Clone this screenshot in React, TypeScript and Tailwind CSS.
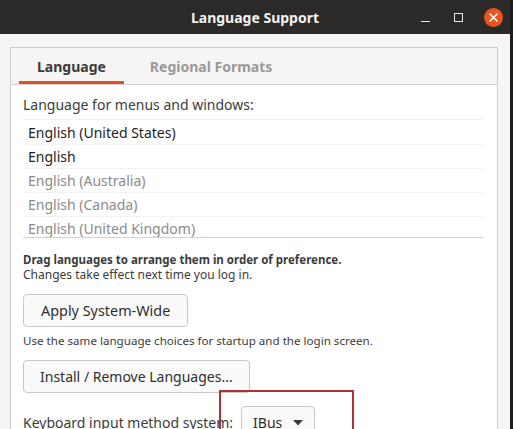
import React from "react";

const languages = [
  { name: "English (United States)", active: true },
  { name: "English", active: true },
  { name: "English (Australia)", active: false },
  { name: "English (Canada)", active: false },
  { name: "English (United Kingdom)", active: false },
];

const font = { fontFamily: '"Noto Sans", "Open Sans", sans-serif' };

export default function App() {
  return (
    <div className="flex h-[429px] w-[513px] overflow-hidden" style={font}>
      <div className="flex w-[510px] flex-col bg-[#f6f5f4]">
        {/* Title bar */}
        <div className="relative flex h-[34px] shrink-0 items-center justify-center bg-[#2c2a29]">
          <span className="text-[14px] font-bold text-[#f2f2f2]">Language Support</span>
          <div className="absolute right-[7px] top-0 flex h-[34px] items-center">
            <div className="mt-[9px] h-[1.5px] w-[9px] bg-[#e8e8e8]" />
            <div className="ml-[24px] h-[9px] w-[9px] border border-[#e8e8e8]" />
            <div className="ml-[21px] flex h-[19px] w-[19px] items-center justify-center rounded-full bg-[#e95420]">
              <svg width="9" height="9" viewBox="0 0 9 9">
                <path d="M1 1L8 8M8 1L1 8" stroke="#fff" strokeWidth="1.6" strokeLinecap="round" />
              </svg>
            </div>
          </div>
        </div>

        {/* Body */}
        <div className="relative flex-1 pl-[10px] pr-[12px] pt-[13px]">
          <div className="h-full border border-[#cdcbc9] bg-white">
            {/* Tabs */}
            <div className="flex h-[37px] border-b border-[#d6d4d2] bg-[#f6f5f4] pl-[8px]">
              <div className="flex h-full items-center border-b-[3px] border-[#d95326] px-[18px] pt-[3px]">
                <span className="text-[14px] font-bold text-[#3a3a3a]">Language</span>
              </div>
              <div className="ml-[8px] flex h-full items-center px-[18px]">
                <span className="text-[14px] font-bold text-[#9a9998]">Regional Formats</span>
              </div>
            </div>

            {/* Content */}
            <div className="pl-[12px] pr-[14px] pt-[10px]">
              <div className="h-[20px] text-[14px] leading-[20px] text-[#3c3c3c]">
                Language for menus and windows:
              </div>
              <div className="mt-[4px] h-[119px] overflow-hidden border-b border-[#d2d2d2] border-t border-t-[#efefef]">
                {languages.map((l, i) => (
                  <div
                    key={l.name}
                    className={
                      "flex h-[24px] items-center pl-[5px] text-[14px] " +
                      (i > 0 ? "border-t border-[#f3f3f3] " : "") +
                      (l.active ? "text-[#1e1e1e]" : "text-[#8b8b8b]")
                    }
                  >
                    {l.name}
                  </div>
                ))}
              </div>

              <div className="mt-[14px] text-[11.5px] font-bold leading-[15px] text-[#3c3c3c]">
                Drag languages to arrange them in order of preference.
              </div>
              <div className="text-[12px] leading-[15px] text-[#3c3c3c]">
                Changes take effect next time you log in.
              </div>

              <button className="mt-[12px] flex h-[33px] items-center rounded-[4px] border border-[#cdc7c2] bg-[#fafafa] px-[17px] text-[14.4px] text-[#2e2e2e]">
                Apply System-Wide
              </button>

              <div className="mt-[6px] text-[11.6px] leading-[15px] text-[#3c3c3c]">
                Use the same language choices for startup and the login screen.
              </div>

              <button className="mt-[12px] flex h-[33px] items-center rounded-[4px] border border-[#cdc7c2] bg-[#fafafa] px-[16px] text-[14px] text-[#2e2e2e]">
                Install / Remove Languages...
              </button>

              <div className="mt-[13px] flex items-center">
                <span className="text-[14px] text-[#3c3c3c]">Keyboard input method system:</span>
                <button className="ml-[8px] flex h-[33px] items-center rounded-[4px] border border-[#cdc7c2] bg-[#fafafa] pl-[11px] pr-[11px] text-[14px] text-[#2e2e2e]">
                  IBus
                  <svg className="ml-[11px]" width="10" height="6" viewBox="0 0 10 6">
                    <path d="M0 0H10L5 5.5Z" fill="#3a3a3a" />
                  </svg>
                </button>
              </div>
            </div>
          </div>

          {/* Highlight annotation */}
          <div className="absolute left-[219px] top-[356px] h-[80px] w-[135px] border-2 border-[#b42e38]" />
        </div>
      </div>
      <div className="w-[3px] bg-[#1c1c1c]" />
    </div>
  );
}
